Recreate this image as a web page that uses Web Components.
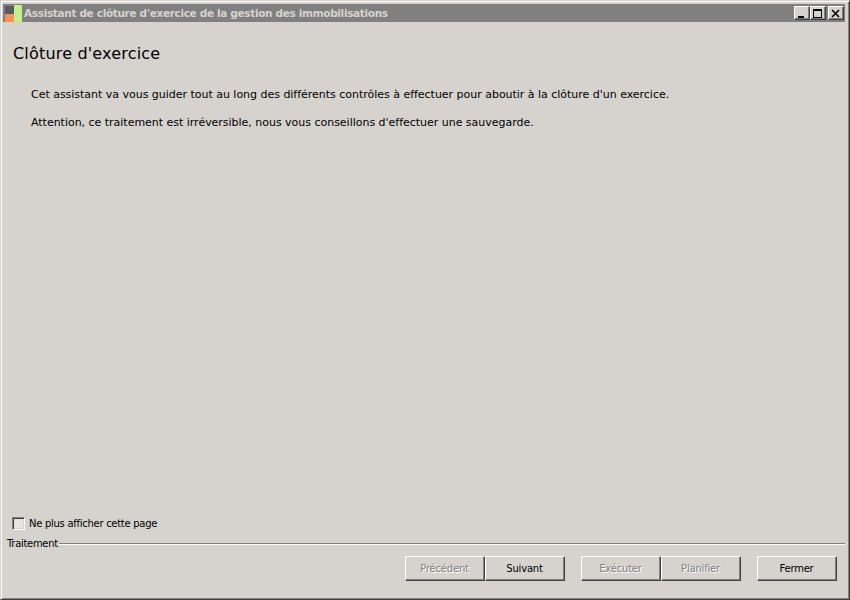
<!DOCTYPE html>
<html>
<head>
<meta charset="utf-8">
<title>Clôture d'exercice</title>
<style>
  html, body { margin: 0; height: 100%; overflow: hidden; background: #d6d3ce; }
  body { font: 10px "DejaVu Sans", sans-serif; color: #000; }
</style>
</head>
<body>
<wiz-window>
  <span slot="title">Assistant de clôture d'exercice de la gestion des immobilisations</span>
  <wiz-page heading="Clôture d'exercice">
    <p>Cet assistant va vous guider tout au long des différents contrôles à effectuer pour aboutir à la clôture d'un exercice.</p>
    <p>Attention, ce traitement est irréversible, nous vous conseillons d'effectuer une sauvegarde.</p>
  </wiz-page>
  <wiz-check>Ne plus afficher cette page</wiz-check>
  <wiz-actions legend="Traitement">
    <wiz-button disabled>Précédent</wiz-button>
    <wiz-button>Suivant</wiz-button>
    <wiz-button disabled class="gap">Exécuter</wiz-button>
    <wiz-button disabled>Planifier</wiz-button>
    <wiz-button class="gap">Fermer</wiz-button>
  </wiz-actions>
</wiz-window>

<script>
'use strict';

class WizWindow extends HTMLElement {
  constructor() {
    super();
    this.attachShadow({ mode: 'open' }).innerHTML = `
      <style>
        :host {
          display: flex;
          flex-direction: column;
          box-sizing: border-box;
          width: 850px;
          height: 600px;
          background: #d6d3ce;
          border: 1px solid;
          border-color: #d6d3ce #404040 #404040 #d6d3ce;
          box-shadow: inset 1px 1px 0 #fff, inset -1px -1px 0 #808080;
          padding: 3px 4px 2px 2px;
        }
        .bar {
          display: flex;
          align-items: center;
          flex: none;
          height: 18px;
          background: #808080;
          color: #d6d3ce;
          font: bold 10.5px "DejaVu Sans", sans-serif;
          letter-spacing: -0.33px;
          white-space: nowrap;
        }
        .logo { flex: none; margin: 0 2px 0 2px; }
        .title { flex: 1; }
        .controls { display: flex; margin-right: 1px; }
        .controls button {
          box-sizing: border-box;
          width: 16px;
          height: 14px;
          padding: 0;
          display: block;
          background: #d6d3ce;
          border: 1px solid;
          border-color: #fff #404040 #404040 #fff;
          box-shadow: inset -1px -1px 0 #808080;
        }
        .controls button:last-child { margin-left: 2px; }
        .controls svg { display: block; }
        .body { flex: 1; display: flex; flex-direction: column; min-height: 0; }
      </style>
      <div class="bar">
        <svg class="logo" width="17" height="17" viewBox="0 0 17 17">
          <rect x="0" y="1" width="9" height="8" fill="#5a5a5a"/>
          <rect x="0" y="9" width="9" height="8" fill="#f4925a"/>
          <rect x="9" y="0" width="8" height="17" fill="#c4f08c"/>
        </svg>
        <span class="title"><slot name="title"></slot></span>
        <span class="controls">
          <button tabindex="-1"><svg width="14" height="12" viewBox="0 0 14 12"><rect x="3" y="9" width="6" height="2" fill="#000"/></svg></button>
          <button tabindex="-1"><svg width="14" height="12" viewBox="0 0 14 12"><path d="M2 2h9v9H2z M3 4v6h7V4z" fill="#000" fill-rule="evenodd"/></svg></button>
          <button tabindex="-1"><svg width="14" height="12" viewBox="0 0 14 12"><path d="M3 3l7 7M10 3l-7 7" stroke="#000" stroke-width="1.6" fill="none"/></svg></button>
        </span>
      </div>
      <div class="body"><slot></slot></div>
    `;
  }
}

class WizPage extends HTMLElement {
  constructor() {
    super();
    this.attachShadow({ mode: 'open' }).innerHTML = `
      <style>
        :host { display: block; flex: 1; padding: 22px 0 0 10px; }
        h1 {
          margin: 0 0 25px;
          font: 400 16px/19px "DejaVu Sans", sans-serif;
          letter-spacing: 0.18px;
        }
        .text { padding-left: 18px; }
        ::slotted(p) {
          margin: 0 0 14px;
          font: 11px/14px "DejaVu Sans", sans-serif;
          letter-spacing: -0.02px;
          white-space: nowrap;
        }
      </style>
      <h1></h1>
      <div class="text"><slot></slot></div>
    `;
    this.shadowRoot.querySelector('h1').textContent = this.getAttribute('heading');
  }
}

class WizCheck extends HTMLElement {
  constructor() {
    super();
    this.attachShadow({ mode: 'open' }).innerHTML = `
      <style>
        :host { display: flex; align-items: center; gap: 4px; margin: 0 0 7px 9px; height: 13px; font-size: 10px; letter-spacing: -0.28px; }
        i {
          box-sizing: border-box;
          width: 13px;
          height: 13px;
          background: #e6e4e0;
          border: 1px solid;
          border-color: #808080 #fff #fff #808080;
          box-shadow: inset 1px 1px 0 #404040, inset -1px -1px 0 #d6d3ce;
        }
      </style>
      <i></i><slot></slot>
    `;
  }
}

class WizActions extends HTMLElement {
  constructor() {
    super();
    this.attachShadow({ mode: 'open' }).innerHTML = `
      <style>
        :host { display: block; flex: none; margin-left: 4px; height: 60px; }
        .head { display: flex; align-items: center; height: 13px; font-size: 10px; letter-spacing: -0.3px; }
        .rule { flex: 1; margin-left: 1px; height: 1px; background: #808080; border-bottom: 1px solid #fff; }
        .row { display: flex; justify-content: flex-end; padding: 6px 8px 0 0; }
      </style>
      <div class="head"><span></span><div class="rule"></div></div>
      <div class="row"><slot></slot></div>
    `;
    this.shadowRoot.querySelector('span').textContent = this.getAttribute('legend');
  }
}

class WizButton extends HTMLElement {
  constructor() {
    super();
    this.attachShadow({ mode: 'open' }).innerHTML = `
      <style>
        :host {
          display: flex;
          align-items: center;
          justify-content: center;
          box-sizing: border-box;
          width: 80px;
          height: 25px;
          padding-right: 1px;
          background: #d6d3ce;
          border: 1px solid;
          border-color: #fff #404040 #404040 #fff;
          box-shadow: inset -1px -1px 0 #808080;
          font-size: 10px;
          letter-spacing: -0.2px;
        }
        :host([disabled]) { color: #808080; text-shadow: 1px 1px 0 #fff; }
        :host(.gap) { margin-left: 16px; }
      </style>
      <slot></slot>
    `;
  }
}

customElements.define('wiz-window', WizWindow);
customElements.define('wiz-page', WizPage);
customElements.define('wiz-check', WizCheck);
customElements.define('wiz-actions', WizActions);
customElements.define('wiz-button', WizButton);
</script>
</body>
</html>
